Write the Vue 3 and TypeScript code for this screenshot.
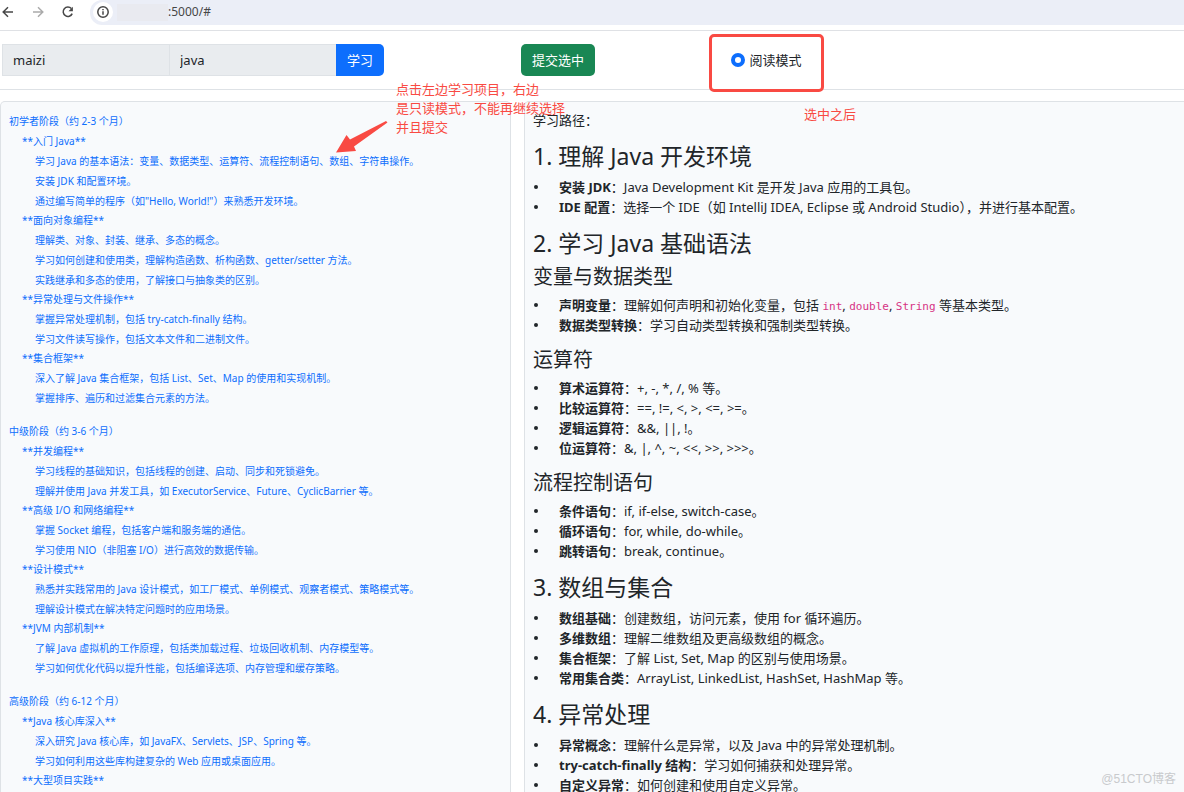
<script setup lang="ts">
import { ref } from 'vue'

interface Topic {
  title: string
  items: string[]
}
interface Stage {
  title: string
  topics: Topic[]
}
interface Part {
  text: string
  code?: boolean
}
interface Point {
  term: string
  parts: Part[]
}
interface Block {
  level: 'chapter' | 'section'
  title: string
  points: Point[]
}

const owner = ref('maizi')
const subject = ref('java')
const mode = ref('read')

const stages: Stage[] = [
  {
    title: '初学者阶段（约 2-3 个月）',
    topics: [
      {
        title: '**入门 Java**',
        items: [
          '学习 Java 的基本语法：变量、数据类型、运算符、流程控制语句、数组、字符串操作。',
          '安装 JDK 和配置环境。',
          '通过编写简单的程序（如"Hello, World!"）来熟悉开发环境。',
        ],
      },
      {
        title: '**面向对象编程**',
        items: [
          '理解类、对象、封装、继承、多态的概念。',
          '学习如何创建和使用类，理解构造函数、析构函数、getter/setter 方法。',
          '实践继承和多态的使用，了解接口与抽象类的区别。',
        ],
      },
      {
        title: '**异常处理与文件操作**',
        items: ['掌握异常处理机制，包括 try-catch-finally 结构。', '学习文件读写操作，包括文本文件和二进制文件。'],
      },
      {
        title: '**集合框架**',
        items: ['深入了解 Java 集合框架，包括 List、Set、Map 的使用和实现机制。', '掌握排序、遍历和过滤集合元素的方法。'],
      },
    ],
  },
  {
    title: '中级阶段（约 3-6 个月）',
    topics: [
      {
        title: '**并发编程**',
        items: [
          '学习线程的基础知识，包括线程的创建、启动、同步和死锁避免。',
          '理解并使用 Java 并发工具，如 ExecutorService、Future、CyclicBarrier 等。',
        ],
      },
      {
        title: '**高级 I/O 和网络编程**',
        items: ['掌握 Socket 编程，包括客户端和服务端的通信。', '学习使用 NIO（非阻塞 I/O）进行高效的数据传输。'],
      },
      {
        title: '**设计模式**',
        items: [
          '熟悉并实践常用的 Java 设计模式，如工厂模式、单例模式、观察者模式、策略模式等。',
          '理解设计模式在解决特定问题时的应用场景。',
        ],
      },
      {
        title: '**JVM 内部机制**',
        items: [
          '了解 Java 虚拟机的工作原理，包括类加载过程、垃圾回收机制、内存模型等。',
          '学习如何优化代码以提升性能，包括编译选项、内存管理和缓存策略。',
        ],
      },
    ],
  },
  {
    title: '高级阶段（约 6-12 个月）',
    topics: [
      {
        title: '**Java 核心库深入**',
        items: ['深入研究 Java 核心库，如 JavaFX、Servlets、JSP、Spring 等。', '学习如何利用这些库构建复杂的 Web 应用或桌面应用。'],
      },
      { title: '**大型项目实践**', items: [] },
    ],
  },
]

const point = (term: string, text: string): Point => ({ term, parts: [{ text }] })

const blocks: Block[] = [
  {
    level: 'chapter',
    title: '1. 理解 Java 开发环境',
    points: [
      point('安装 JDK', '：Java Development Kit 是开发 Java 应用的工具包。'),
      point('IDE 配置', '：选择一个 IDE（如 IntelliJ IDEA, Eclipse 或 Android Studio），并进行基本配置。'),
    ],
  },
  { level: 'chapter', title: '2. 学习 Java 基础语法', points: [] },
  {
    level: 'section',
    title: '变量与数据类型',
    points: [
      {
        term: '声明变量',
        parts: [
          { text: '：理解如何声明和初始化变量，包括 ' },
          { text: 'int', code: true },
          { text: ', ' },
          { text: 'double', code: true },
          { text: ', ' },
          { text: 'String', code: true },
          { text: ' 等基本类型。' },
        ],
      },
      point('数据类型转换', '：学习自动类型转换和强制类型转换。'),
    ],
  },
  {
    level: 'section',
    title: '运算符',
    points: [
      point('算术运算符', '：+, -, *, /, % 等。'),
      point('比较运算符', '：==, !=, <, >, <=, >=。'),
      point('逻辑运算符', '：&&, ||, !。'),
      point('位运算符', '：&, |, ^, ~, <<, >>, >>>。'),
    ],
  },
  {
    level: 'section',
    title: '流程控制语句',
    points: [
      point('条件语句', '：if, if-else, switch-case。'),
      point('循环语句', '：for, while, do-while。'),
      point('跳转语句', '：break, continue。'),
    ],
  },
  {
    level: 'chapter',
    title: '3. 数组与集合',
    points: [
      point('数组基础', '：创建数组，访问元素，使用 for 循环遍历。'),
      point('多维数组', '：理解二维数组及更高级数组的概念。'),
      point('集合框架', '：了解 List, Set, Map 的区别与使用场景。'),
      point('常用集合类', '：ArrayList, LinkedList, HashSet, HashMap 等。'),
    ],
  },
  {
    level: 'chapter',
    title: '4. 异常处理',
    points: [
      point('异常概念', '：理解什么是异常，以及 Java 中的异常处理机制。'),
      point('try-catch-finally 结构', '：学习如何捕获和处理异常。'),
      point('自定义异常', '：如何创建和使用自定义异常。'),
    ],
  },
]
</script>

<template>
  <div class="page">
    <header class="browser">
      <button class="nav" type="button" aria-label="后退">
        <svg viewBox="0 0 16 16"><path d="M13 8H3.5M8 3.2 3.2 8 8 12.8" /></svg>
      </button>
      <button class="nav faded" type="button" aria-label="前进">
        <svg viewBox="0 0 16 16"><path d="M3 8h9.5M8 3.2 12.8 8 8 12.8" /></svg>
      </button>
      <button class="nav" type="button" aria-label="刷新">
        <svg viewBox="0 0 16 16">
          <path d="M11.4 4.6A4.7 4.7 0 1 0 12.2 9.600" />
          <path class="solid" d="M12.900 2.800v4.400H8.500Z" />
        </svg>
      </button>
      <div class="address">
        <span class="info">
          <svg viewBox="0 0 16 16"><circle cx="8" cy="8" r="5.2" /><path d="M8 7.3v3.4M8 5v1.3" /></svg>
        </span>
        <span class="masked"></span>
        <span class="url">:5000/#</span>
      </div>
    </header>

    <form class="toolbar" @submit.prevent>
      <div class="search">
        <input v-model="owner" type="text" aria-label="用户" readonly />
        <input v-model="subject" type="text" aria-label="学习主题" readonly />
        <button class="learn" type="submit">学习</button>
      </div>
      <div class="submit-cell">
        <button class="submit" type="button">提交选中</button>
      </div>
      <div class="mode-cell">
        <label class="mode"><input v-model="mode" type="radio" name="mode" value="read" />阅读模式</label>
      </div>
    </form>

    <main class="panels">
      <nav class="panel outline">
        <section v-for="stage in stages" :key="stage.title" class="stage">
          <a href="#" class="stage-title">{{ stage.title }}</a>
          <div v-for="topic in stage.topics" :key="topic.title" class="topic">
            <a href="#" class="topic-title">{{ topic.title }}</a>
            <a v-for="item in topic.items" :key="item" href="#" class="item">{{ item }}</a>
          </div>
        </section>
      </nav>

      <article class="panel reader">
        <p class="lead">学习路径：</p>
        <template v-for="block in blocks" :key="block.title">
          <h2 v-if="block.level === 'chapter'">{{ block.title }}</h2>
          <h3 v-else>{{ block.title }}</h3>
          <ul v-if="block.points.length">
            <li v-for="p in block.points" :key="p.term">
              <div>
                <strong>{{ p.term }}</strong>
                <template v-for="(part, i) in p.parts" :key="i">
                  <code v-if="part.code">{{ part.text }}</code>
                  <span v-else>{{ part.text }}</span>
                </template>
              </div>
            </li>
          </ul>
        </template>
      </article>
    </main>

    <div class="frame"></div>
    <p class="note tip">点击左边学习项目，右边<br />是只读模式，不能再继续选择<br />并且提交</p>
    <p class="note after">选中之后</p>
    <svg class="arrow" viewBox="0 0 54 34"><path d="M1 32.500 11.500 15l3.500 4.500L51 1l1.500 1.500L19 26.500l2 4.500Z" /></svg>
    <span class="watermark">@51CTO博客</span>
  </div>
</template>

<style>
body {
  margin: 0;
}
</style>

<style scoped>
.page {
  position: relative;
  display: flex;
  flex-direction: column;
  height: 100vh;
  overflow: hidden;
  background: #fff;
  color: #212529;
  font-family: "Noto Sans", "Noto Sans CJK SC", sans-serif;
  font-size: 13px;
  line-height: 20px;
}
.page * {
  box-sizing: border-box;
}
button,
input {
  font: inherit;
  margin: 0;
}
a {
  color: #0d6efd;
  text-decoration: none;
}

.browser {
  display: flex;
  flex: none;
  align-items: flex-start;
  height: 31px;
  border-bottom: 1px solid #dfe1e5;
}
.nav {
  flex: none;
  width: 16px;
  height: 24px;
  padding: 4px 0;
  margin-right: 14px;
  border: 0;
  background: none;
}
.nav svg,
.info svg {
  display: block;
  width: 16px;
  height: 16px;
  fill: none;
  stroke: #474747;
  stroke-width: 1.5;
}
.nav .solid {
  fill: #474747;
  stroke: none;
}
.nav.faded svg {
  stroke: #ababab;
}
.address {
  display: flex;
  flex: 1;
  align-items: center;
  height: 25px;
  padding: 0 0 1px 3px;
  border-radius: 12px 0 0 12px;
  background: #ebeef7;
}
.info {
  padding: 2px;
  border-radius: 50%;
  background: #fff;
}
.masked {
  width: 51px;
  height: 17px;
  margin-left: 4px;
  background: #e9eaf0;
}
.url {
  font-size: 12px;
  color: #474747;
}

.toolbar {
  display: grid;
  grid-template-columns: 44% 16% 40%;
  flex: none;
  padding: 13px 0;
  border-bottom: 1px solid #dee2e6;
}
.search {
  display: flex;
  padding: 0 137px 0 2px;
}
.search input {
  flex: 1;
  min-width: 0;
  height: 32px;
  padding: 0 10px;
  border: 1px solid #dee2e6;
  border-right: 0;
  background: #e9ecef;
  color: #212529;
}
.learn {
  width: 48px;
  border: 0;
  border-radius: 0 5px 5px 0;
  background: #0d6efd;
  color: #fff;
}
.submit {
  height: 32px;
  padding: 0 11px;
  border: 0;
  border-radius: 5px;
  background: #198754;
  color: #fff;
}
.mode-cell {
  padding-left: 21px;
}
.mode {
  display: flex;
  align-items: center;
  gap: 4px;
  height: 32px;
}
.mode input {
  appearance: none;
  width: 14px;
  height: 14px;
  border: 4px solid #0d6efd;
  border-radius: 50%;
  background: #fff;
}

.panels {
  display: grid;
  grid-template-columns: 511fr 660fr;
  gap: 13px;
  flex: 1;
  min-height: 0;
  padding-top: 11px;
}
.panel {
  min-height: 0;
  overflow: hidden;
  border: 1px solid #dee2e6;
  border-bottom: 0;
  border-radius: 5px 5px 0 0;
  background: #f8fafc;
  padding: 9px 8px 0;
}
.outline {
  font-size: 10px;
}
.reader {
  padding-top: 8px;
  border-right: 0;
  border-radius: 5px 0 0 0;
}
.outline a {
  display: block;
  white-space: nowrap;
}
.stage {
  margin-bottom: 13px;
}
.outline .stage-title {
  line-height: 21px;
}
.outline .topic-title {
  padding-left: 13px;
  line-height: 19px;
}
.item {
  padding-left: 26px;
}
.lead {
  margin: 0 0 12px;
}
h2,
h3 {
  margin: 0;
  font-weight: 400;
}
h2 {
  font-size: 23px;
  line-height: 28px;
  margin-bottom: 7px;
}
h3 {
  font-size: 20px;
  line-height: 26px;
  margin-bottom: 5px;
}
ul {
  margin: 0 0 12px;
  padding: 0;
  list-style: none;
}
li {
  display: flex;
  align-items: center;
  height: 20px;
}
li::before {
  content: "";
  flex: none;
  width: 4px;
  height: 4px;
  margin: 0 21px 0 1px;
  border-radius: 50%;
  background: #212529;
}
strong {
  font-weight: 700;
}
code {
  font-family: "DejaVu Sans Mono", monospace;
  font-size: 11px;
  line-height: 1;
  color: #d63384;
}

.note {
  position: absolute;
  margin: 0;
  color: #f94a43;
  line-height: 19px;
  white-space: nowrap;
}
.tip {
  left: 396px;
  top: 80px;
}
.after {
  left: 804px;
  top: 105px;
}
.frame {
  position: absolute;
  left: 709px;
  top: 34px;
  width: 115px;
  height: 58px;
  border: 3px solid #f94a43;
  border-radius: 5px;
}
.arrow {
  position: absolute;
  left: 335px;
  top: 120px;
  width: 54px;
  height: 34px;
  fill: #f94a43;
}
.watermark {
  position: absolute;
  right: 8px;
  bottom: 3px;
  font-family: "Liberation Sans", "Noto Sans CJK SC", sans-serif;
  font-size: 12px;
  color: #c8cacd;
}
</style>
